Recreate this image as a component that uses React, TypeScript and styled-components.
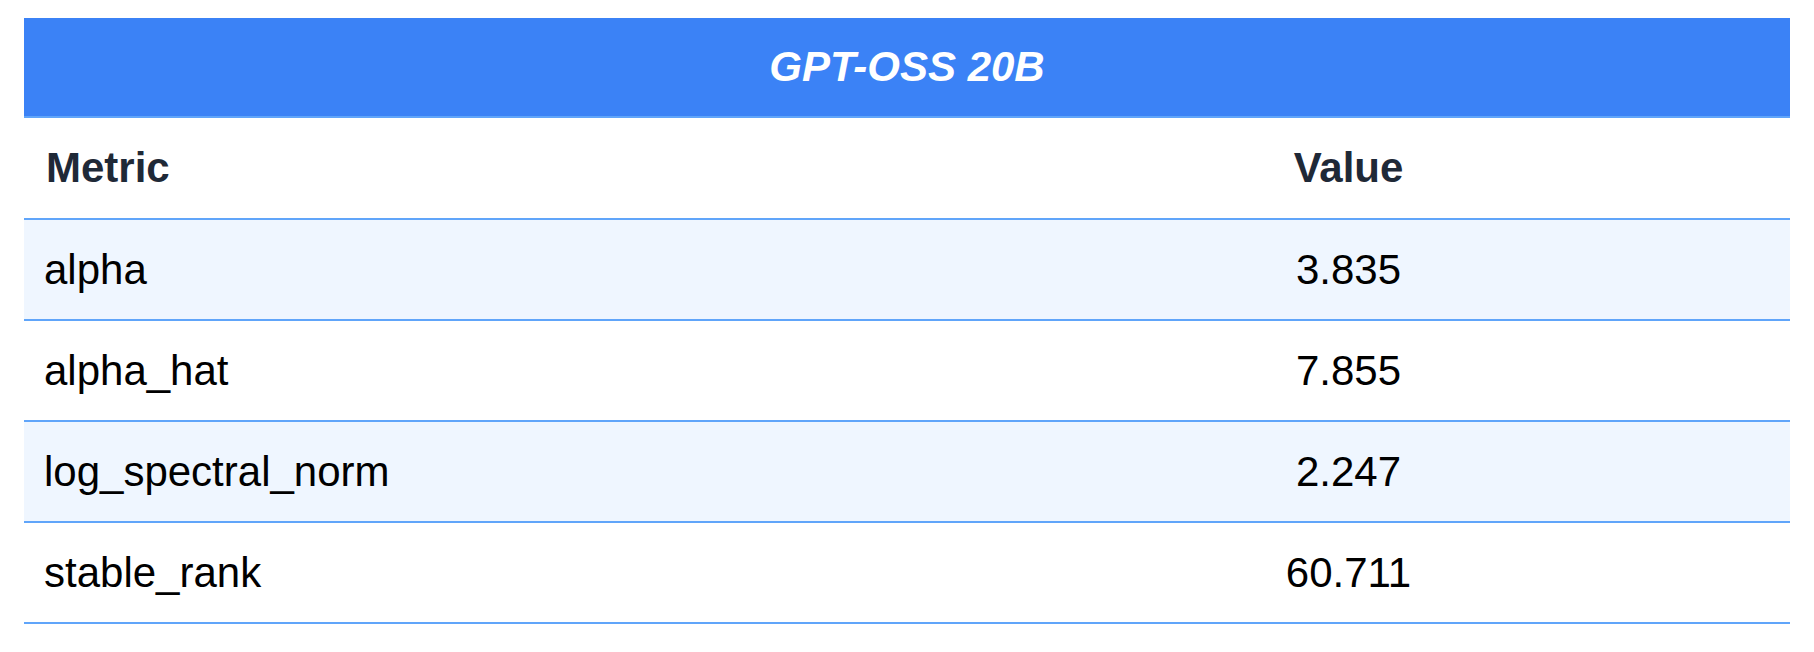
import React from 'react';
import styled, { createGlobalStyle } from 'styled-components';

const GlobalStyle = createGlobalStyle`
  body {
    margin: 0;
    background: #ffffff;
    font-family: "Liberation Sans", Arial, sans-serif;
  }
`;

const Page = styled.div`
  padding: 18px 24px;
`;

const Table = styled.table`
  width: 100%;
  border-collapse: collapse;
  table-layout: fixed;
  font-family: "Liberation Sans", Arial, sans-serif;
`;

const Title = styled.th`
  height: 98px;
  padding: 0;
  background: #3b82f6;
  color: #ffffff;
  font-size: 42px;
  font-weight: 700;
  font-style: italic;
  text-align: center;
  border-bottom: 2px solid #60a5fa;
`;

const HeadCell = styled.th<{ $align: 'left' | 'center' }>`
  height: 100px;
  padding: 0 22px;
  font-size: 42px;
  font-weight: 700;
  color: #1f2937;
  text-align: ${(p) => p.$align};
  background: #ffffff;
  border-bottom: 2px solid #60a5fa;
`;

const Row = styled.tr<{ $striped: boolean }>`
  background: ${(p) => (p.$striped ? '#eff6ff' : '#ffffff')};
`;

const Cell = styled.td<{ $align: 'left' | 'center' }>`
  height: 99px;
  padding: 0 20px;
  font-size: 42px;
  color: #000000;
  text-align: ${(p) => p.$align};
  border-bottom: 2px solid #60a5fa;
`;

const metrics = [
  { name: 'alpha', value: '3.835' },
  { name: 'alpha_hat', value: '7.855' },
  { name: 'log_spectral_norm', value: '2.247' },
  { name: 'stable_rank', value: '60.711' },
];

function App() {
  return (
    <Page>
      <GlobalStyle />
      <Table>
        <thead>
          <tr>
            <Title colSpan={2}>GPT-OSS 20B</Title>
          </tr>
          <tr>
            <HeadCell $align="left">Metric</HeadCell>
            <HeadCell $align="center">Value</HeadCell>
          </tr>
        </thead>
        <tbody>
          {metrics.map((m, i) => (
            <Row key={m.name} $striped={i % 2 === 0}>
              <Cell $align="left">{m.name}</Cell>
              <Cell $align="center">{m.value}</Cell>
            </Row>
          ))}
        </tbody>
      </Table>
    </Page>
  );
}

export default App;
